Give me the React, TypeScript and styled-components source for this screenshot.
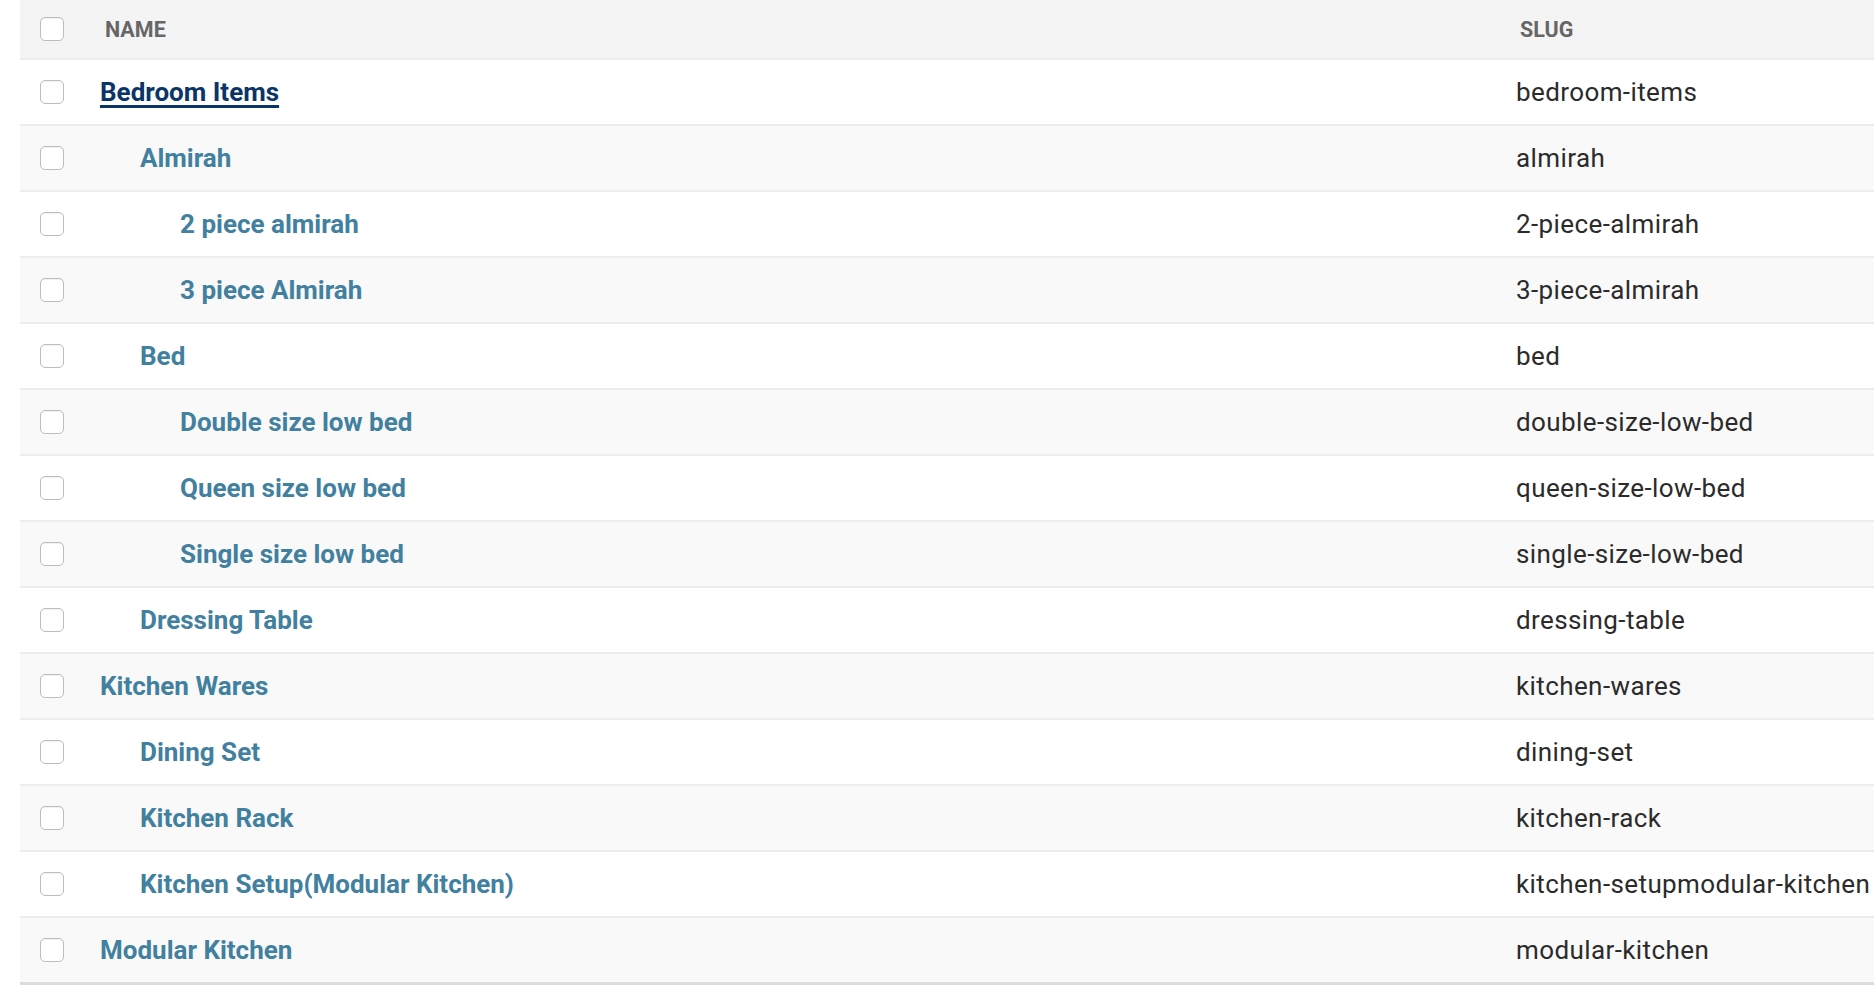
import React from 'react'
import styled, { createGlobalStyle } from 'styled-components'

const GlobalStyle = createGlobalStyle`
  html, body {
    margin: 0;
    padding: 0;
    background: #ffffff;
    font-family: Roboto, "Liberation Sans", sans-serif;
  }
`

const Page = styled.div`
  width: 1874px;
  height: 996px;
  overflow: hidden;
  padding-left: 20px;
  box-sizing: border-box;
`

const Table = styled.div`
  display: flex;
  flex-direction: column;
  border-bottom: 3px solid #dcdcdc;
`

const Row = styled.div<{ $head?: boolean; $alt?: boolean }>`
  display: grid;
  grid-template-columns: 80px 1fr 358px;
  align-items: center;
  height: ${p => (p.$head ? '58px' : '64px')};
  background: ${p => (p.$head ? '#f4f4f4' : p.$alt ? '#f9f9f9' : '#ffffff')};
  border-bottom: 2px solid #ececec;
  &:last-child {
    border-bottom: none;
  }
`

const CheckCell = styled.div`
  display: flex;
  align-items: center;
  padding-left: 20px;
`

const Check = styled.span`
  display: block;
  width: 22px;
  height: 22px;
  border: 1px solid #bdbdbd;
  border-radius: 5px;
  background: #fff;
  box-shadow: inset 0 1px 1px rgba(0, 0, 0, 0.06);
`

const HeadLabel = styled.div<{ $shift?: number }>`
  padding-left: ${p => p.$shift ?? 0}px;
  font-size: 21.5px;
  font-weight: 700;
  color: #666666;
  text-transform: uppercase;
`

const NameCell = styled.div<{ $level: number }>`
  padding-left: ${p => p.$level * 40}px;
  white-space: nowrap;
`

const NameLink = styled.a<{ $active?: boolean }>`
  font-size: 26px;
  font-weight: 700;
  color: ${p => (p.$active ? '#0b3566' : '#41809f')};
  text-decoration: ${p => (p.$active ? 'underline' : 'none')};
  text-decoration-thickness: 3px;
  text-underline-offset: 4px;
  cursor: pointer;
`

const SlugCell = styled.div`
  font-size: 26px;
  letter-spacing: 0.4px;
  color: #2b2b2b;
  white-space: nowrap;
  overflow: hidden;
`

const rows = [
  { name: 'Bedroom Items', slug: 'bedroom-items', level: 0, active: true },
  { name: 'Almirah', slug: 'almirah', level: 1 },
  { name: '2 piece almirah', slug: '2-piece-almirah', level: 2 },
  { name: '3 piece Almirah', slug: '3-piece-almirah', level: 2 },
  { name: 'Bed', slug: 'bed', level: 1 },
  { name: 'Double size low bed', slug: 'double-size-low-bed', level: 2 },
  { name: 'Queen size low bed', slug: 'queen-size-low-bed', level: 2 },
  { name: 'Single size low bed', slug: 'single-size-low-bed', level: 2 },
  { name: 'Dressing Table', slug: 'dressing-table', level: 1 },
  { name: 'Kitchen Wares', slug: 'kitchen-wares', level: 0 },
  { name: 'Dining Set', slug: 'dining-set', level: 1 },
  { name: 'Kitchen Rack', slug: 'kitchen-rack', level: 1 },
  { name: 'Kitchen Setup(Modular Kitchen)', slug: 'kitchen-setupmodular-kitchen', level: 1 },
  { name: 'Modular Kitchen', slug: 'modular-kitchen', level: 0 },
]

const App = () => {
  return (
    <Page>
      <GlobalStyle />
      <Table>
        <Row $head>
          <CheckCell>
            <Check />
          </CheckCell>
          <HeadLabel $shift={5}>Name</HeadLabel>
          <HeadLabel $shift={4}>Slug</HeadLabel>
        </Row>
        {rows.map((r, i) => (
          <Row key={r.slug} $alt={i % 2 === 1}>
            <CheckCell>
              <Check />
            </CheckCell>
            <NameCell $level={r.level}>
              <NameLink $active={r.active}>{r.name}</NameLink>
            </NameCell>
            <SlugCell>{r.slug}</SlugCell>
          </Row>
        ))}
      </Table>
    </Page>
  )
}

export default App
